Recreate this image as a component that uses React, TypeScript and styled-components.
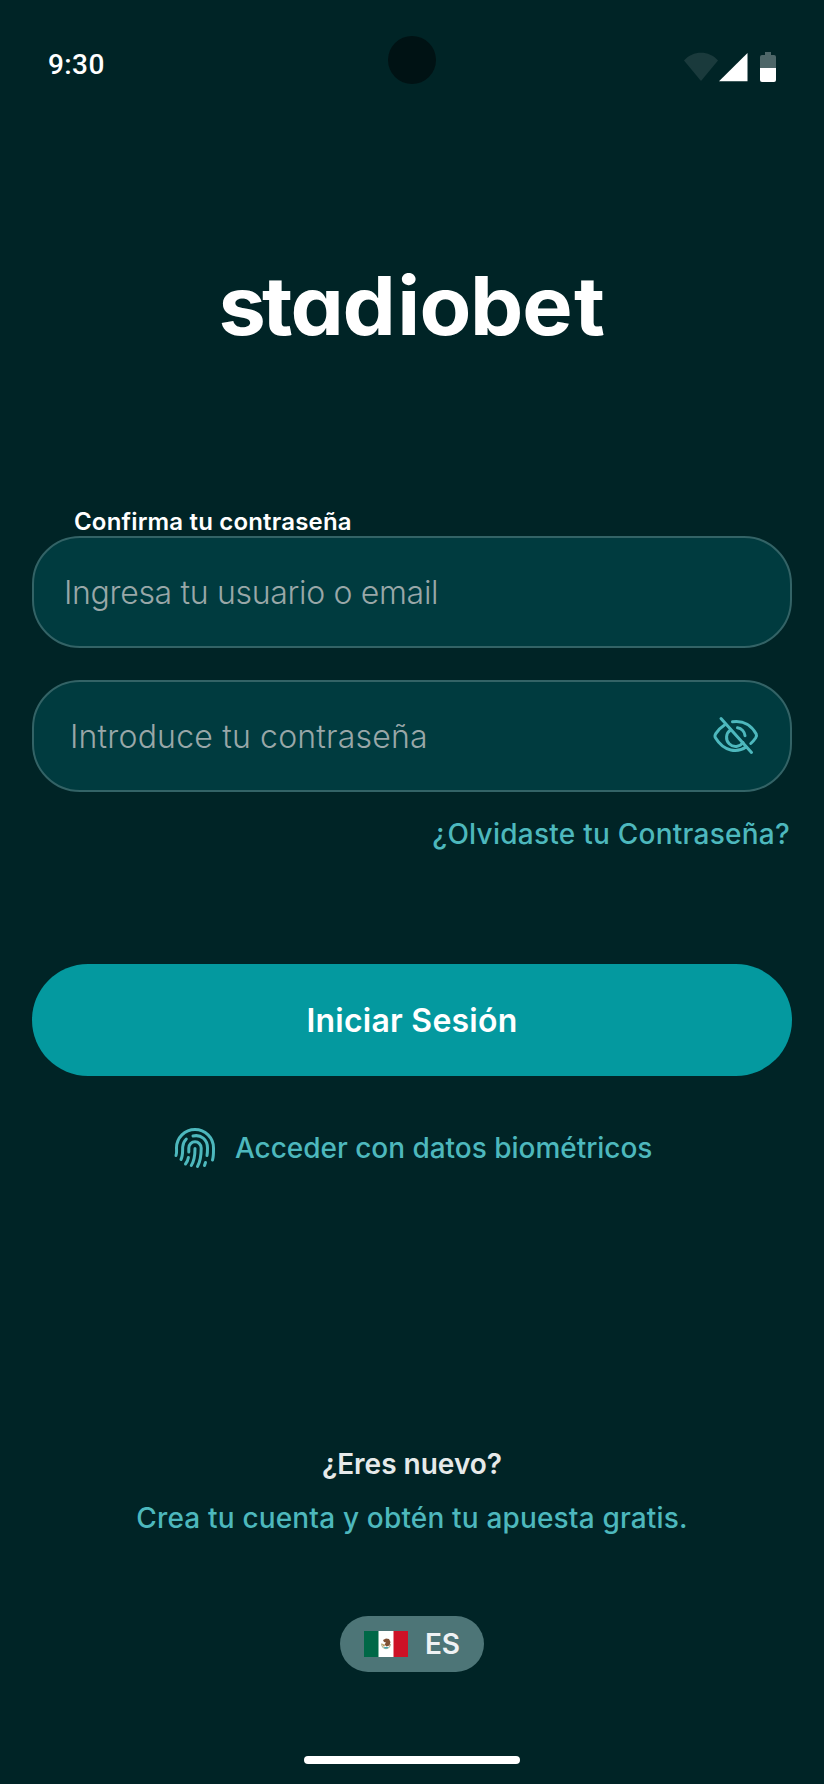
import React from 'react';
import styled, { createGlobalStyle } from 'styled-components';

const GlobalStyle = createGlobalStyle`
  * { box-sizing: border-box; }
  body { margin: 0; background: #002426; }
`;

const Screen = styled.main`
  position: relative;
  display: flex;
  flex-direction: column;
  width: 824px;
  height: 1784px;
  background: #002426;
  color: #fff;
  font-family: Inter, "Liberation Sans", sans-serif;
  overflow: hidden;
`;

const StatusBar = styled.header`
  display: grid;
  grid-template-columns: 1fr auto 1fr;
  align-items: start;
  height: 104px;
  padding: 36px 48px 0;
`;

const Clock = styled.time`
  margin-top: 13px;
  font: 500 28px/32px Roboto, sans-serif;
  letter-spacing: 0.4px;
`;

const Camera = styled.div`
  width: 48px;
  height: 48px;
  border-radius: 50%;
  background: #001214;
`;

const StatusIcons = styled.svg`
  justify-self: end;
  margin-top: 16px;
`;

const Logo = styled.svg`
  display: block;
  margin: 136px auto 0;
`;

const Wordmark = styled.text`
  fill: #fff;
  font-family: Inter, sans-serif;
  font-size: 81px;
  font-weight: 700;
  font-feature-settings: "cv11";
`;

const Form = styled.form`
  display: flex;
  flex-direction: column;
  padding: 0 32px;
  margin-top: 138px;
`;

const Label = styled.label`
  margin-left: 42px;
  height: 30px;
  font-size: 24px;
  line-height: 32px;
  font-weight: 600;
  letter-spacing: 0.18px;
  white-space: nowrap;
`;

const Field = styled.div<{ $inset: number }>`
  display: flex;
  align-items: center;
  justify-content: space-between;
  height: 112px;
  padding: 0 29px 0 ${p => p.$inset}px;
  border: 2px solid #336366;
  border-radius: 48px;
  background: #003b3f;
  & + & { margin-top: 32px; }
`;

const Placeholder = styled.span<{ $tracking: number }>`
  padding-top: 2px;
  color: #99a7a8;
  font-size: 32px;
  line-height: 40px;
  font-weight: 300;
  letter-spacing: ${p => p.$tracking}px;
  white-space: nowrap;
`;

const TextLink = styled.a<{ $tracking: number }>`
  color: #4db8bd;
  font-size: 28px;
  line-height: 40px;
  font-weight: 500;
  letter-spacing: ${p => p.$tracking}px;
  white-space: nowrap;
`;

const ForgotRow = styled.div`
  display: flex;
  justify-content: flex-end;
  margin-top: 22px;
  padding-right: 2px;
`;

const SubmitButton = styled.button`
  height: 112px;
  margin-top: 110px;
  padding: 2px 0 0;
  border: 0;
  border-radius: 56px;
  background: #04999f;
  color: #fff;
  font: 600 32px/40px Inter, sans-serif;
  letter-spacing: 0.24px;
`;

const Biometric = styled.div`
  display: flex;
  align-items: center;
  gap: 18px;
  height: 48px;
  margin: 48px 0 0 173px;
`;

const SignUp = styled.section`
  display: flex;
  flex-direction: column;
  align-items: center;
  gap: 14px;
  margin-top: 272px;
`;

const Question = styled.p`
  margin: 0;
  color: #e6eaea;
  font-size: 28px;
  line-height: 40px;
  font-weight: 600;
  letter-spacing: 0;
`;

const Language = styled.button`
  display: flex;
  align-items: center;
  align-self: center;
  gap: 17px;
  width: 144px;
  height: 56px;
  margin-top: 78px;
  padding: 0 0 0 24px;
  border: 0;
  border-radius: 28px;
  background: #4d7577;
  color: #eff2f4;
  font: 600 28px/40px Inter, sans-serif;
  letter-spacing: -0.3px;
`;

const HomeIndicator = styled.div`
  align-self: center;
  width: 216px;
  height: 8px;
  margin-top: 84px;
  border-radius: 4px;
  background: #fff;
`;

const EyeOff = () => (
  <svg width="48" height="48" viewBox="0 0 48 48" fill="none" stroke="#4db8bd" strokeWidth="3" strokeLinecap="round" strokeLinejoin="round">
    <path d="M19.500 9.700C31 8 39 14 43.200 22c.8 1.500.5 2.300-.6 4C41 28.300 39.500 30 37.800 31.500" />
    <path d="M11.500 13C7.500 15.500 4.600 18.900 2.600 21.900c-.9 1.500-.9 2.700 0 4.200C11 40 24.500 41 33 35" />
    <path d="M17.500 18a9 9 0 1 0 12.500 12.500" />
    <path d="M24.500 15.700a9 9 0 0 1 7.500 8" />
    <path d="M8 6.500 38.500 40.500" />
  </svg>
);

const Fingerprint = () => (
  <svg width="44" height="48" viewBox="0 0 44 48" fill="none" stroke="#4db8bd" strokeWidth="3" strokeLinecap="round">
    <path d="M3 31.500C4 29 3.500 26.500 3.500 24a18.500 18.500 0 0 1 37 0c0 4 .2 8-1 12" />
    <path d="M8 35.500c2-4 1.500-8 1.700-12.500.2-3.500 1.600-6 3.600-8" />
    <path d="M20 12c8-1.800 14.500 3.500 14.500 12 0 3 0 5-.5 7.500" />
    <path d="M12.500 40c1.700-2 2.500-4 2.900-6.500" />
    <path d="M15.800 28V24a6.200 6.200 0 0 1 12.400 0c0 7.500-.3 12.500-3.700 18.500" />
    <path d="M22 24.500c0 7-.5 12-3.700 17" />
    <path d="m32.500 38.500-1 3" />
  </svg>
);

const MexicoFlag = () => (
  <svg width="44" height="26" viewBox="0 0 44 26">
    <path fill="#fff" d="M0 0h44v26H0z" />
    <path fill="#006847" d="M0 0h14.500v26H0z" />
    <path fill="#ce1126" d="M29.500 0H44v26H29.500z" />
    <path d="M17.500 13c1 6 8 6 9 0" fill="none" stroke="#b5b99a" strokeWidth="1.300" />
    <path d="m19 9 3-1.500 3 .5 1.500 3-1 3.500-3 1-2-2 1.500-2-2-.5z" fill="#805134" />
    <path d="m17 12 4 2-1 2z" fill="#b89556" />
    <path d="M20 16h4.500l-1 1.500h-3z" fill="#42a6b5" />
  </svg>
);

export default function App() {
  return (
    <>
      <GlobalStyle />
      <Screen>
        <StatusBar>
          <Clock>9:30</Clock>
          <Camera />
          <StatusIcons width="92" height="30" viewBox="0 0 92 30">
            <path d="M0 8.500C9-1.800 25-1.800 34 8.500L17 29z" fill="#1a3a3c" />
            <path d="M63.500 1v28.300H35z" fill="#fff" />
            <path d="M81 0h6v3h3a2 2 0 0 1 2 2v11H76V5a2 2 0 0 1 2-2h3z" fill="#4d6668" />
            <path d="M76 16h16v12a2 2 0 0 1-2 2H78a2 2 0 0 1-2-2z" fill="#fff" />
          </StatusIcons>
        </StatusBar>
        <Logo width="400" height="128" viewBox="0 0 400 128" role="img">
          <Wordmark transform="scale(1.045 1)" x="6.300 47.800 75.200 125 177.400 198.500 247 297 346.300" y="95">stadiobet</Wordmark>
        </Logo>
        <Form>
          <Label>Confirma tu contraseña</Label>
          <Field $inset={30}>
            <Placeholder $tracking={-0.32}>Ingresa tu usuario o email</Placeholder>
          </Field>
          <Field $inset={36}>
            <Placeholder $tracking={0.19}>Introduce tu contraseña</Placeholder>
            <EyeOff />
          </Field>
          <ForgotRow><TextLink $tracking={0.25}>¿Olvidaste tu Contraseña?</TextLink></ForgotRow>
          <SubmitButton type="button">Iniciar Sesión</SubmitButton>
        </Form>
        <Biometric>
          <Fingerprint />
          <TextLink $tracking={-0.03}>Acceder con datos biométricos</TextLink>
        </Biometric>
        <SignUp>
          <Question>¿Eres nuevo?</Question>
          <TextLink $tracking={0.17}>Crea tu cuenta y obtén tu apuesta gratis.</TextLink>
        </SignUp>
        <Language type="button"><MexicoFlag />ES</Language>
        <HomeIndicator />
      </Screen>
    </>
  );
}
